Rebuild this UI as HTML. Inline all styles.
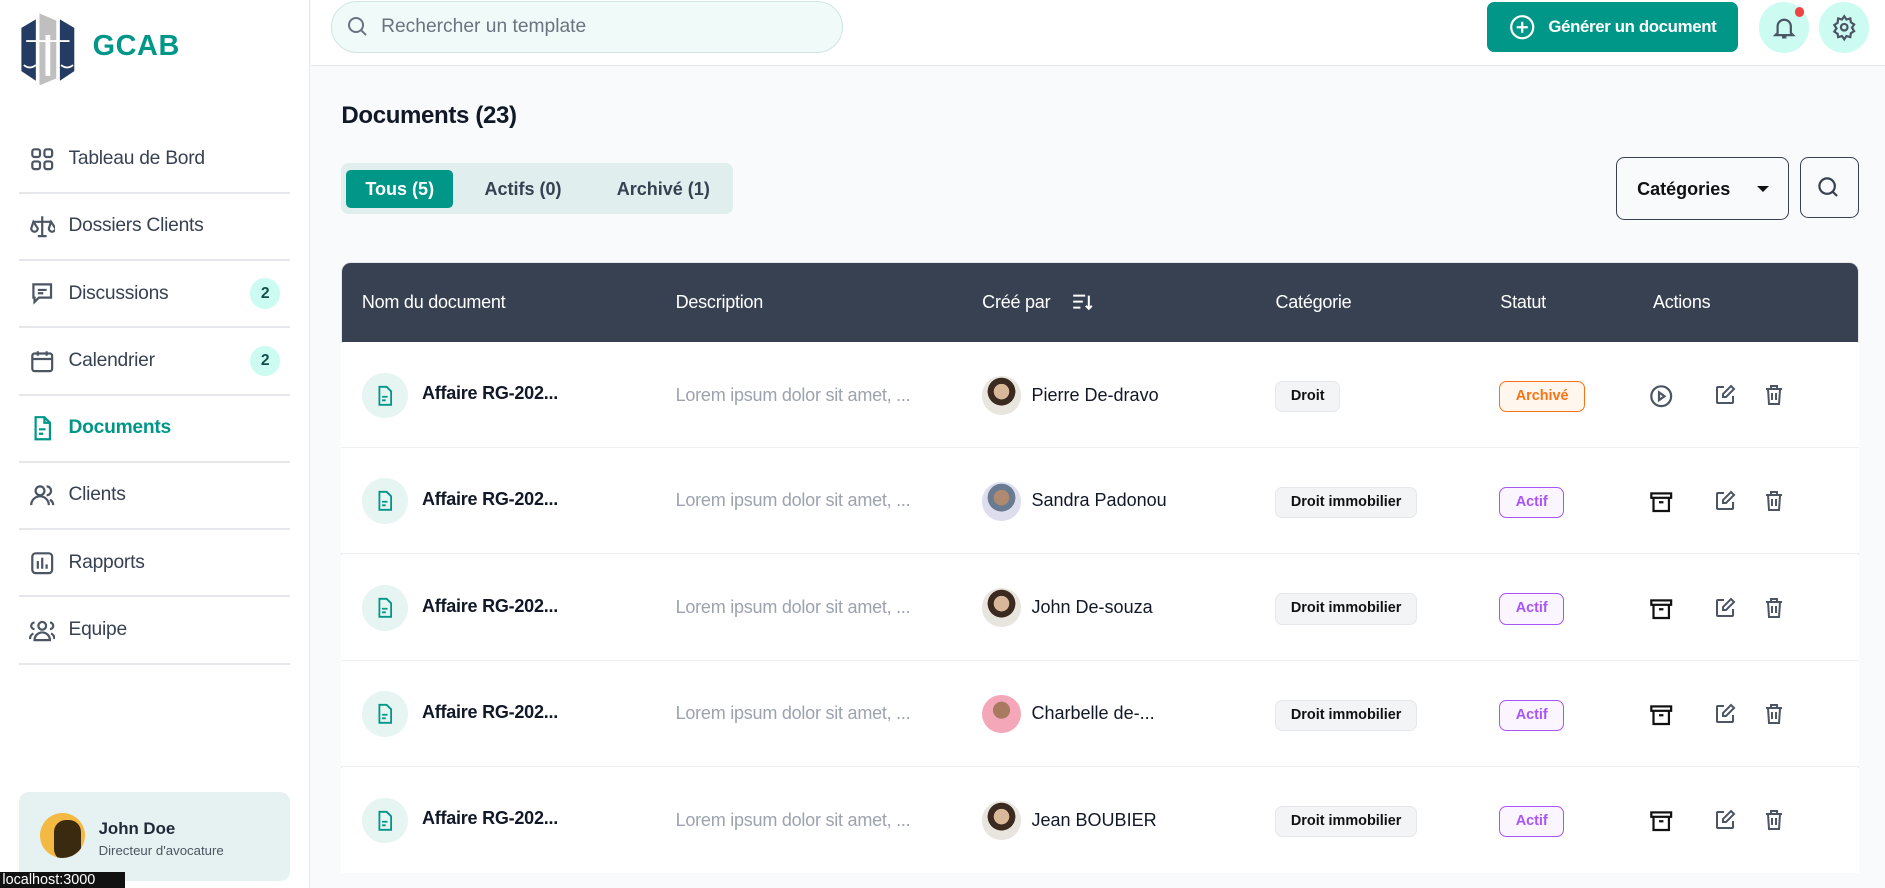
<!DOCTYPE html>
<html><head><meta charset="utf-8"><style>
*{box-sizing:border-box;margin:0;padding:0}
html,body{width:1885px;height:888px;overflow:hidden;background:#f9fafb}
#w{zoom:1.20217;width:1568px;height:739px;position:relative;font-family:"Liberation Sans",sans-serif;color:#1f2937;overflow:hidden}
.a{position:absolute}
.side{left:0;top:0;width:258px;height:739px;background:#fff;border-right:1px solid #e5e7eb}
.nav{left:16px;width:225px;height:56px;border-bottom:2px solid #e5e7eb;display:flex;align-items:center;font-size:16px;color:#374151;letter-spacing:-0.2px}
.nav svg{margin:0 11px 0 8px}
.badge{position:absolute;right:8px;width:25px;height:25px;border-radius:50%;background:#ccfbf1;color:#134e4a;font-size:13px;font-weight:bold;display:flex;align-items:center;justify-content:center}
.th{top:243px;color:#fff;font-size:15px;letter-spacing:-0.2px}
.row{left:284px;width:1262px;height:88px;border-bottom:1px solid #eef0f2;background:#fff}
.row>*{position:absolute}
.ic{left:17px;top:25px;width:38px;height:38px;border-radius:50%;background:#e6f4f2;display:flex;align-items:center;justify-content:center}
.nm{left:67px;top:34px;font-weight:bold;font-size:15px;color:#111827;letter-spacing:-0.2px}
.ds{left:278px;top:35px;font-size:15px;color:#9ca3af;letter-spacing:-0.2px}
.av{left:533px;top:28px;width:32px;height:32px;border-radius:50%}
.pn{left:574px;top:35px;font-size:15px;color:#111827}
.cat{left:777px;top:32px;height:26px;padding:0 12px;border:1px solid #e5e7eb;background:#f3f4f6;border-radius:6px;font-size:12px;font-weight:bold;color:#111;line-height:24px}
.st{left:963px;top:32px;height:26px;padding:0 13px;border-radius:6px;font-size:12px;font-weight:bold;line-height:24px}
.arc{border:1px solid #f97316;color:#f97316;background:#fff7ed}
.act{border:1px solid #a855f7;color:#a855f7;background:#faf5ff}
.ac1{left:1087px;top:34px}.ac2{left:1141px;top:34px}.ac3{left:1182px;top:34px}
</style></head><body><div id="w">
<div class="a side">
 <svg class="a" style="left:16px;top:9px" width="48" height="62" viewBox="0 0 48 62"><polygon points="2,14 14,7 14,58 2,50" fill="#243b63"/><polygon points="34,7 46,14 46,50 34,58" fill="#243b63"/><polygon points="17,2 31,8 31,56 17,62" fill="#bfbfbf"/><line x1="6" y1="25" x2="42" y2="25" stroke="#fff" stroke-width="1.5"/><path d="M4 45 q5 4 10 0 M35 45 q5 4 10 0" stroke="#fff" fill="none" stroke-width="1.5"/><rect x="22" y="20" width="4" height="34" fill="#fff"/></svg>
 <div class="a" style="left:77px;top:25px;font-size:24px;font-weight:bold;color:#009688;letter-spacing:0.5px">GCAB</div>
 <div class="a nav" style="top:105px"><svg width="22" height="22" viewBox="0 0 24 24" fill="none" stroke="#4b5563" stroke-width="2"><rect x="3" y="3" width="7" height="7" rx="2"/><rect x="14" y="3" width="7" height="7" rx="2"/><rect x="3" y="14" width="7" height="7" rx="2"/><rect x="14" y="14" width="7" height="7" rx="2"/></svg>Tableau de Bord</div>
 <div class="a nav" style="top:161px"><svg width="22" height="22" viewBox="0 0 24 24" fill="none" stroke="#4b5563" stroke-width="2"><path d="M12 3v18M8 21h8M4 8h16M4 8l-2 6a3 3 0 006 0zM20 8l-2 6a3 3 0 006 0z"/></svg>Dossiers Clients</div>
 <div class="a nav" style="top:217px"><svg width="22" height="22" viewBox="0 0 24 24" fill="none" stroke="#4b5563" stroke-width="2"><path d="M4 4h16v12H9l-4 4v-4H4z"/><path d="M8 9h8M8 12h5"/></svg>Discussions<span class="badge">2</span></div>
 <div class="a nav" style="top:273px"><svg width="22" height="22" viewBox="0 0 24 24" fill="none" stroke="#4b5563" stroke-width="2"><rect x="3" y="5" width="18" height="16" rx="2"/><path d="M8 3v4M16 3v4M3 10h18"/></svg>Calendrier<span class="badge">2</span></div>
 <div class="a nav" style="top:329px;color:#009688;font-weight:bold"><svg width="22" height="22" viewBox="0 0 24 24" fill="none" stroke="#009688" stroke-width="2"><path d="M6 2h8l5 5v15H6z"/><path d="M14 2v5h5M9 13h6M9 17h4"/></svg>Documents</div>
 <div class="a nav" style="top:385px"><svg width="22" height="22" viewBox="0 0 24 24" fill="none" stroke="#4b5563" stroke-width="2"><circle cx="10" cy="8" r="4"/><path d="M2 21a8 8 0 0116 0M16 4a4 4 0 010 8M22 21a6 6 0 00-3-5"/></svg>Clients</div>
 <div class="a nav" style="top:441px"><svg width="22" height="22" viewBox="0 0 24 24" fill="none" stroke="#4b5563" stroke-width="2"><rect x="3" y="3" width="18" height="18" rx="3"/><path d="M8 10v7M12 7v10M16 13v4"/></svg>Rapports</div>
 <div class="a nav" style="top:497px"><svg width="22" height="22" viewBox="0 0 24 24" fill="none" stroke="#4b5563" stroke-width="2"><circle cx="12" cy="8" r="3.5"/><path d="M5 21a7 7 0 0114 0zM5 5a3 3 0 000 6M19 5a3 3 0 010 6M1 20a5 5 0 013-5M23 20a5 5 0 00-3-5"/></svg>Equipe</div>
 <div class="a" style="left:16px;top:659px;width:225px;height:74px;background:#e6f2f1;border-radius:8px">
  <div class="a" style="left:17px;top:17px;width:38px;height:38px;border-radius:50%;background:#f4b942;overflow:hidden"><div class="a" style="left:12px;top:6px;width:22px;height:34px;background:#3a2a10;border-radius:10px"></div></div>
  <div class="a" style="left:66px;top:22px;font-size:14px;font-weight:bold;color:#1f2937">John Doe</div>
  <div class="a" style="left:66px;top:42px;font-size:11px;color:#4b5563">Directeur d'avocature</div>
 </div>
</div>
<div class="a" style="left:0;top:725px;width:104px;height:16px;background:#111;color:#fff;font-size:12px;padding-left:2px">localhost:3000</div>
<div class="a" style="left:259px;top:0;width:1309px;height:55px;background:#fff;border-bottom:1px solid #e5e7eb"></div>
<div class="a" style="left:275px;top:1px;width:426px;height:43px;border-radius:22px;background:#f0faf8;border:1px solid #cfe6e2"></div>
<svg class="a" style="left:287px;top:12px" width="20" height="20" viewBox="0 0 24 24" fill="none" stroke="#6b7280" stroke-width="2"><circle cx="11" cy="11" r="7"/><path d="M16 16l5 5"/></svg>
<div class="a" style="left:317px;top:13px;font-size:16px;color:#6b7280">Rechercher un template</div>
<div class="a" style="left:1237px;top:2px;width:209px;height:41px;background:#009688;border-radius:6px;color:#fff;font-weight:bold;font-size:14px;display:flex;align-items:center;padding-left:18px;letter-spacing:-0.3px"><svg width="22" height="22" viewBox="0 0 24 24" fill="none" stroke="#fff" stroke-width="2" style="margin-right:11px"><circle cx="12" cy="12" r="10"/><path d="M12 7v10M7 12h10"/></svg>Générer un document</div>
<div class="a" style="left:1463px;top:2px;width:42px;height:42px;border-radius:50%;background:#ccfbf1"></div>
<svg class="a" style="left:1473px;top:11px" width="22" height="24" viewBox="0 0 24 24" fill="none" stroke="#4b5563" stroke-width="2"><path d="M6 17V11a6 6 0 0112 0v6l2 2H4zM10 21h4"/></svg>
<div class="a" style="left:1493px;top:6px;width:8px;height:8px;border-radius:50%;background:#ef4444"></div>
<div class="a" style="left:1513px;top:2px;width:42px;height:42px;border-radius:50%;background:#ccfbf1"></div>
<svg class="a" style="left:1523px;top:12px" width="22" height="22" viewBox="0 0 24 24" fill="none" stroke="#4b5563" stroke-width="2"><circle cx="12" cy="12" r="3"/><path d="M12 2l2 3 3.5-1 .5 3.5 3 2-2 3 2 3-3 2-.5 3.5-3.5-1-2 3-2-3-3.5 1L6 18l-3-2 2-3-2-3 3-2L6.5 4 10 5z"/></svg>
<div class="a" style="left:284px;top:85px;font-size:20px;font-weight:bold;color:#111827;letter-spacing:-0.3px">Documents (23)</div>
<div class="a" style="left:284px;top:136px;width:326px;height:42px;background:#e0efee;border-radius:6px"></div>
<div class="a" style="left:288px;top:141px;width:89px;height:32px;background:#009688;border-radius:4px;color:#fff;font-weight:bold;font-size:15px;text-align:center;line-height:32px">Tous (5)</div>
<div class="a" style="left:403px;top:149px;font-weight:bold;font-size:15px;color:#374151">Actifs (0)</div>
<div class="a" style="left:513px;top:149px;font-weight:bold;font-size:15px;color:#374151">Archivé (1)</div>
<div class="a" style="left:1344px;top:131px;width:144px;height:52px;border:1.5px solid #374151;border-radius:7px;font-weight:bold;font-size:15px;color:#111;padding:17px 0 0 17px">Catégories<span style="position:absolute;left:117px;top:23px;border:5px solid transparent;border-top:5px solid #111"></span></div>
<div class="a" style="left:1497px;top:131px;width:49px;height:50px;border:1.5px solid #374151;border-radius:7px"></div>
<svg class="a" style="left:1510px;top:145px" width="22" height="22" viewBox="0 0 24 24" fill="none" stroke="#374151" stroke-width="2"><circle cx="11" cy="11" r="7"/><path d="M16 16l4 4"/></svg>
<div class="a" style="left:284px;top:218px;width:1262px;height:507px;background:#fff;border:1px solid #e5e7eb;border-radius:8px;overflow:hidden"><div style="height:66px;background:#374151"></div></div>
<div class="a th" style="left:301px">Nom du document</div>
<div class="a th" style="left:562px">Description</div>
<div class="a th" style="left:817px">Créé par</div>
<svg class="a" style="left:892px;top:243px" width="18" height="16" viewBox="0 0 18 16" fill="none" stroke="#fff" stroke-width="1.7"><path d="M1 3h10M1 8h8M1 13h6M14 3v11M11.5 11.5l2.5 2.5 2.5-2.5"/></svg>
<div class="a th" style="left:1061px">Catégorie</div>
<div class="a th" style="left:1248px">Statut</div>
<div class="a th" style="left:1375px">Actions</div>

<div id="rows"></div>
<div class="a row" style="top:285px"><div class="ic"><svg width="18" height="18" viewBox="0 0 24 24" fill="none" stroke="#009688" stroke-width="2"><path d="M6 2h8l5 5v15H6z"/><path d="M9 13h6M9 17h4"/></svg></div><div class="nm">Affaire RG-202...</div><div class="ds">Lorem ipsum dolor sit amet, ...</div><div class="av" style="background:radial-gradient(circle at 50% 40%,#d9b89a 25%,#3a2a20 26%,#3a2a20 45%,#e8e4de 46%)"></div><div class="pn">Pierre De-dravo</div><div class="cat">Droit</div><div class="st arc">Archivé</div>
<svg class="ac1" width="22" height="22" viewBox="0 0 24 24" fill="none" stroke="#4b5563" stroke-width="2"><circle cx="12" cy="12" r="9"/><path d="M10 8.5v7l5-3.5z"/></svg>
<svg class="ac2" width="20" height="20" viewBox="0 0 24 24" fill="none" stroke="#4b5563" stroke-width="2"><path d="M11 4H5a1 1 0 00-1 1v14a1 1 0 001 1h14a1 1 0 001-1v-6"/><path d="M18 3l3 3-8 8h-3v-3z"/></svg>
<svg class="ac3" width="20" height="20" viewBox="0 0 24 24" fill="none" stroke="#4b5563" stroke-width="2"><path d="M4 6h16M9 6V3h6v3M6 6l1 15h10l1-15M10 10v7M14 10v7"/></svg></div>
</div>
<script>
var d=[["Sandra Padonou","radial-gradient(circle at 50% 40%,#b08a70 25%,#6a7a90 26%,#6a7a90 45%,#dde 46%)"],["John De-souza","radial-gradient(circle at 50% 40%,#d9b89a 25%,#3a2a20 26%,#3a2a20 45%,#e8e4de 46%)"],["Charbelle de-...","radial-gradient(circle at 50% 40%,#a87a60 28%,#f4a7b9 29%)"],["Jean BOUBIER","radial-gradient(circle at 50% 40%,#d9b89a 25%,#3a2a20 26%,#3a2a20 45%,#e8e4de 46%)"]];
var h="";d.forEach(function(x,i){h+='<div class="a row" style="top:'+(373+i*88.5)+'px'+(i==3?';border-bottom:none':'')+'"><div class="ic"><svg width="18" height="18" viewBox="0 0 24 24" fill="none" stroke="#009688" stroke-width="2"><path d="M6 2h8l5 5v15H6z"/><path d="M9 13h6M9 17h4"/></svg></div><div class="nm">Affaire RG-202...</div><div class="ds">Lorem ipsum dolor sit amet, ...</div><div class="av" style="background:'+x[1]+'"></div><div class="pn">'+x[0]+'</div><div class="cat">Droit immobilier</div><div class="st act">Actif</div><svg class="ac1" width="22" height="22" viewBox="0 0 24 24" fill="none" stroke="#111" stroke-width="2"><rect x="3" y="4" width="18" height="4"/><path d="M5 8v12h14V8M10 12h4"/></svg><svg class="ac2" width="20" height="20" viewBox="0 0 24 24" fill="none" stroke="#4b5563" stroke-width="2"><path d="M11 4H5a1 1 0 00-1 1v14a1 1 0 001 1h14a1 1 0 001-1v-6"/><path d="M18 3l3 3-8 8h-3v-3z"/></svg><svg class="ac3" width="20" height="20" viewBox="0 0 24 24" fill="none" stroke="#4b5563" stroke-width="2"><path d="M4 6h16M9 6V3h6v3M6 6l1 15h10l1-15M10 10v7M14 10v7"/></svg></div>'});
document.getElementById("rows").outerHTML=h;
</script>
</body></html>
